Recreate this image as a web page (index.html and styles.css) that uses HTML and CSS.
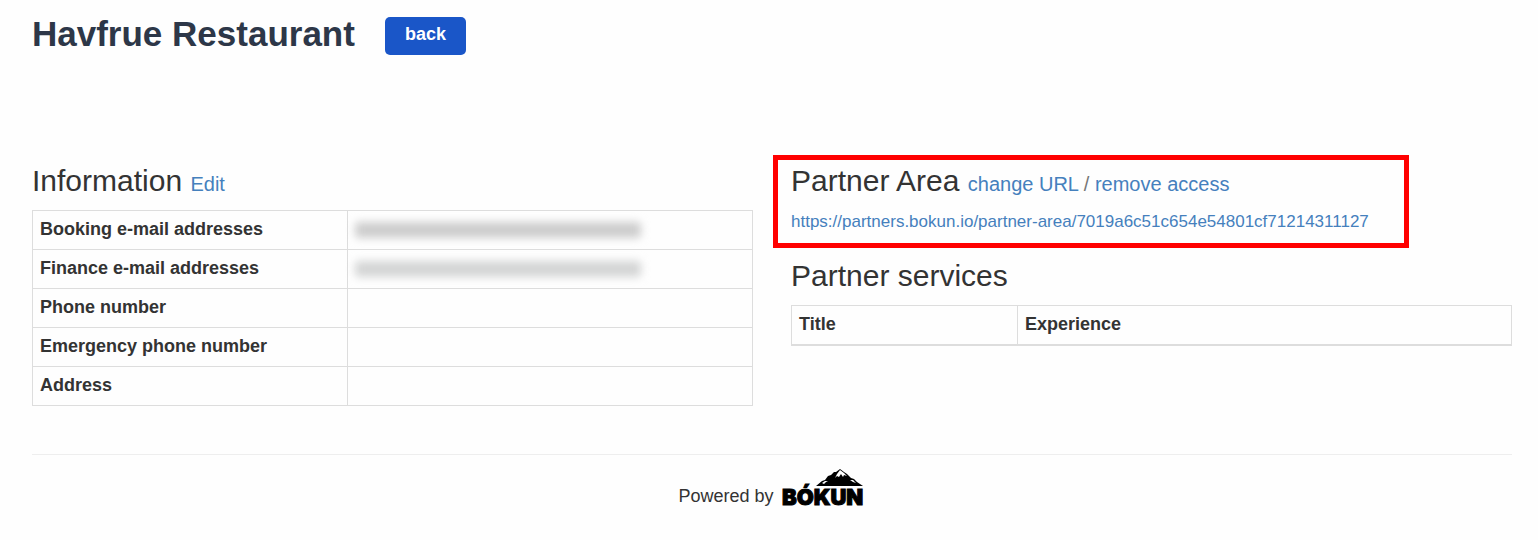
FILE: index.html
```
<!DOCTYPE html>
<html lang="en">
<head>
    <meta charset="utf-8">
    <meta name="viewport" content="width=device-width, initial-scale=1">
    <title>Havfrue Restaurant</title>
    <link rel="stylesheet" href="styles.css">
</head>
<body>
    <header class="page-header">
        <h1>Havfrue Restaurant</h1>
        <button type="button" class="btn">back</button>
    </header>

    <main class="row">
        <section>
            <h2>Information <small><a href="#edit">Edit</a></small></h2>
            <table class="table info">
                <tr>
                    <th scope="row">Booking e-mail addresses</th>
                    <td><span class="redacted"></span></td>
                </tr>
                <tr>
                    <th scope="row">Finance e-mail addresses</th>
                    <td><span class="redacted light"></span></td>
                </tr>
                <tr>
                    <th scope="row">Phone number</th>
                    <td></td>
                </tr>
                <tr>
                    <th scope="row">Emergency phone number</th>
                    <td></td>
                </tr>
                <tr>
                    <th scope="row">Address</th>
                    <td></td>
                </tr>
            </table>
        </section>

        <section>
            <div class="partner-area">
                <h2>Partner Area <small><a href="#change">change URL</a> / <a href="#remove">remove access</a></small></h2>
                <a class="partner-url" href="https://partners.bokun.io/partner-area/7019a6c51c654e54801cf71214311127">https://partners.bokun.io/partner-area/7019a6c51c654e54801cf71214311127</a>
            </div>
            <h2>Partner services</h2>
            <table class="table services">
                <thead>
                    <tr>
                        <th scope="col">Title</th>
                        <th scope="col">Experience</th>
                    </tr>
                </thead>
            </table>
        </section>
    </main>

    <footer class="footer">
        <span>Powered by</span>
        <svg class="logo" width="84" height="44" viewBox="0 0 84 44" role="img" aria-label="Bókun">
            <path d="M34 17 L40 12 L43 11 L46 7 L49 6 L52 3 L54 3 L58 0 L62 3 L65 5 L69 9 L72 10 L75 13 L81 17 Z"/>
            <path class="snow" d="M58 1 L62 4 L65 7 L62 6 L61 8 L59 5 L57 8 L55 7 L53 9 L55 5 Z"/>
            <path class="snow" d="M40 14 L43 12 L46 12 L44 13 L42 15 Z M68 11 L71 11 L74 14 L71 13 Z"/>
            <text x="0" y="36">BÓKUN</text>
        </svg>
    </footer>
</body>
</html>
```
FILE: styles.css
```
* {
    box-sizing: border-box;
}

body {
    margin: 0;
    padding: 12px 26px 0 32px;
    font-family: "Liberation Sans", Arial, sans-serif;
    font-size: 18px;
    line-height: 26px;
    color: #333;
    background-color: #fefefe;
}

a {
    color: #4580bd;
    text-decoration: none;
}

h1 {
    margin: 0;
    font-size: 35px;
    line-height: 44px;
    color: #2d3748;
}

h2 {
    margin: 0 0 12px;
    font-size: 30px;
    line-height: 34px;
    font-weight: normal;
}

h2 small {
    font-size: 20px;
    line-height: 1;
    color: #777;
}

.page-header {
    display: flex;
    align-items: center;
    gap: 30px;
    margin-bottom: 108px;
}

.btn {
    height: 38px;
    margin-top: 3px;
    padding: 0 20px 2px;
    border: 0;
    border-radius: 5px;
    font: bold 18px "Liberation Sans", Arial, sans-serif;
    color: #fff;
    background-color: #1a56c8;
    cursor: pointer;
}

.row {
    display: grid;
    grid-template-columns: 1fr 1fr;
    gap: 38px;
}

.table {
    width: 100%;
    border-collapse: collapse;
    table-layout: fixed;
}

.table th,
.table td {
    height: 39px;
    padding: 5px 7px 6px;
    border: 1px solid #ddd;
    text-align: left;
    vertical-align: top;
}

.info th {
    width: 315px;
}

.services th:first-child {
    width: 226px;
}

.services thead th {
    border-bottom-width: 2px;
}

.redacted {
    display: block;
    width: 286px;
    height: 16px;
    margin-top: 6px;
    border-radius: 4px;
    background-color: #cdcdcd;
    filter: blur(4px);
}

.light {
    background-color: #d4d5d5;
}

.partner-area {
    position: relative;
    width: fit-content;
    margin-bottom: 24px;
}

.partner-area h2 {
    margin-bottom: 10px;
}

.partner-url {
    font-size: 17px;
}

/* red frame around the partner area */
.partner-area::after {
    content: "";
    position: absolute;
    inset: -9px -40px -13px -18px;
    border: 5px solid #f00;
    pointer-events: none;
}

.footer {
    display: flex;
    justify-content: center;
    align-items: flex-end;
    gap: 8px;
    margin-top: 48px;
    padding-top: 14px;
    border-top: 1px solid #eee;
}

.footer span {
    padding-bottom: 4px;
}

.logo text {
    font-family: Inter, sans-serif;
    font-size: 22px;
    font-weight: 900;
    stroke: #000;
    stroke-width: 1;
}

.logo .snow {
    fill: #fff;
}
```
